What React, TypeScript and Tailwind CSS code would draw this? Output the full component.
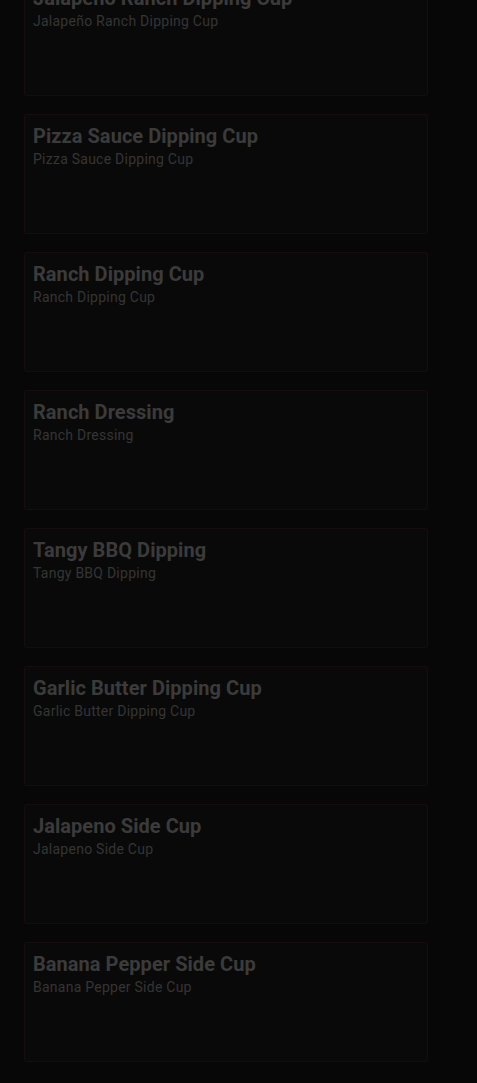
import React from "react";

const items = [
  ["Jalapeño Ranch Dipping Cup", "Jalapeño Ranch Dipping Cup"],
  ["Pizza Sauce Dipping Cup", "Pizza Sauce Dipping Cup"],
  ["Ranch Dipping Cup", "Ranch Dipping Cup"],
  ["Ranch Dressing", "Ranch Dressing"],
  ["Tangy BBQ Dipping", "Tangy BBQ Dipping"],
  ["Garlic Butter Dipping Cup", "Garlic Butter Dipping Cup"],
  ["Jalapeno Side Cup", "Jalapeno Side Cup"],
  ["Banana Pepper Side Cup", "Banana Pepper Side Cup"],
];

export default function App() {
  return (
    <div className="h-[1083px] w-full overflow-hidden bg-[#070707] font-['Roboto',sans-serif]">
      <div className="mt-[-24px] flex flex-col gap-[18px] pl-[24px]">
        {items.map(([t, s], i) => (
          <div
            key={i}
            className="h-[120px] w-[404px] rounded-[3px] border border-[#170c0e] bg-[#0a0909] px-[8px] pt-[7px]"
          >
            <div className="text-[20px] font-bold leading-[28px] tracking-[0.05px] text-[#3b3b3b]">{t}</div>
            <div className="text-[14px] leading-[18px] tracking-[0.25px] text-[#353535]">{s}</div>
          </div>
        ))}
      </div>
    </div>
  );
}
